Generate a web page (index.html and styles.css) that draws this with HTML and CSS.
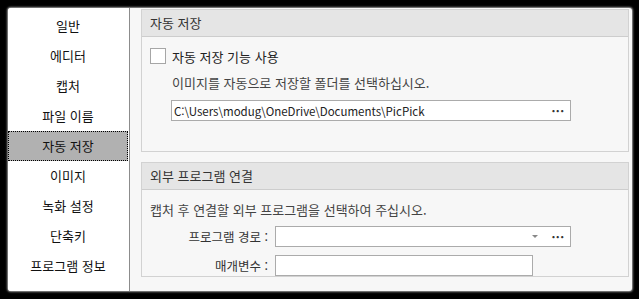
FILE: index.html
```html
<!DOCTYPE html>
<html lang="ko">

<head>
  <meta charset="UTF-8">
  <title>옵션 - 자동 저장</title>
  <link rel="stylesheet" href="styles.css">
</head>

<body>
  <div class="window">
    <ul class="side-menu">
      <li>일반</li>
      <li>에디터</li>
      <li>캡처</li>
      <li>파일 이름</li>
      <li class="active">자동 저장</li>
      <li>이미지</li>
      <li>녹화 설정</li>
      <li>단축키</li>
      <li>프로그램 정보</li>
    </ul>

    <div class="content">
      <div class="group">
        <div class="group-header">자동 저장</div>
        <div class="group-body auto-save">
          <label class="check-row">
            <span class="checkbox"></span>
            <span class="check-label">자동 저장 기능 사용</span>
          </label>
          <p class="desc indent">이미지를 자동으로 저장할 폴더를 선택하십시오.</p>
          <div class="field path-field">
            <span class="field-text">C:\Users\modug\OneDrive\Documents\PicPick</span>
            <span class="dots">···</span>
          </div>
        </div>
      </div>

      <div class="group">
        <div class="group-header">외부 프로그램 연결</div>
        <div class="group-body">
          <p class="desc">캡처 후 연결할 외부 프로그램을 선택하여 주십시오.</p>
          <div class="form-row">
            <span class="form-label">프로그램 경로 :</span>
            <div class="field program-field">
              <span class="field-text"></span>
              <span class="caret"></span>
              <span class="dots">···</span>
            </div>
          </div>
          <div class="form-row">
            <span class="form-label">매개변수 :</span>
            <div class="field param-field"></div>
          </div>
        </div>
      </div>
    </div>
  </div>
</body>

</html>
```

FILE: styles.css
```css
body {
  margin: 0;
  background: #000;
  font-family: "Noto Sans CJK KR", "Noto Sans", sans-serif;
  font-size: 13px;
  color: #222;
}

.window {
  display: flex;
  width: 624px;
  height: 283px;
  margin: 8px;
  border-radius: 3px;
  overflow: hidden;
  box-shadow: 0 0 2px 1px #999;
  background: #f7f7f7;
}

.side-menu {
  list-style: none;
  margin: 0;
  padding: 3px 1px 0 0;
  width: 120px;
  background: #fff;
  border-right: 1px solid #8c8c8c;
}

.side-menu li {
  height: 30px;
  line-height: 30px;
  text-align: center;
  color: #111;
}

.side-menu li.active {
  background: #b1b1b1;
  outline: 1px dotted #000;
  outline-offset: -1px;
}

.content {
  flex: 1;
  padding: 1px 3px 0 11px;
  display: flex;
  flex-direction: column;
  gap: 10px;
}

.group {
  border: 1px solid #d2d2d2;
  background: #f7f7f7;
}

.group-header {
  height: 26px;
  line-height: 26px;
  padding-left: 8px;
  background: #e5e5e5;
  border-bottom: 1px solid #cdcdcd;
  color: #333;
}

.group-body {
  padding: 11px 0 0 8px;
}

.auto-save {
  height: 103px;
}

.check-row {
  display: flex;
  align-items: center;
  gap: 6px;
  height: 16px;
}

.checkbox {
  width: 14px;
  height: 14px;
  border: 1px solid #a6a6a6;
  background: #fff;
}

.check-label {
  color: #222;
}

.desc {
  margin: 0;
  color: #444;
  line-height: 17px;
}

.indent {
  margin: 10px 0 0 22px;
}

.field {
  display: flex;
  align-items: center;
  height: 19px;
  border: 1px solid #ababab;
  background: #fff;
}

.field-text {
  flex: 1;
  padding-left: 2px;
  color: #222;
  font-size: 11.5px;
}

.path-field {
  width: 398px;
  margin: 9px 0 0 21px;
}

.dots {
  width: 24px;
  text-align: center;
  font-weight: bold;
  color: #333;
  font-size: 12px;
  letter-spacing: 0.5px;
}

.form-row {
  display: flex;
  align-items: center;
  gap: 7px;
  margin-top: 8px;
}

.form-label {
  width: 118px;
  text-align: right;
  color: #333;
  font-size: 12.5px;
}

.program-field {
  width: 294px;
}

.caret {
  width: 0;
  height: 0;
  margin-right: 8px;
  border-left: 3px solid transparent;
  border-right: 3px solid transparent;
  border-top: 3px solid #888;
}

.param-field {
  width: 256px;
}
```
